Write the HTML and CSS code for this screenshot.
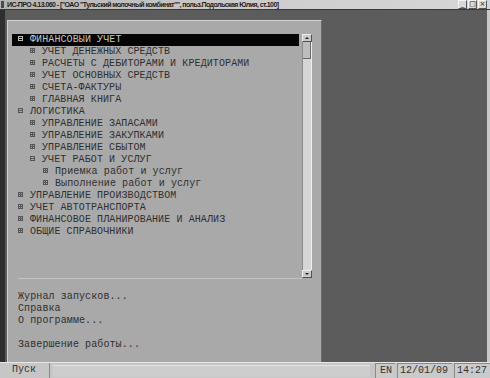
FILE: index.html
```html
<!DOCTYPE html>
<html>
<head>
<meta charset="utf-8">
<title>ИС-ПРО 4.13.060</title>
<link rel="stylesheet" href="styles.css">
</head>
<body>
<div class="screen">
	<div class="titlebar">
		<span class="app-ico"></span>
		<span class="title">ИС-ПРО 4.13.060 - ["ОАО "Тульский молочный комбинат"", польз.Подольская Юлия, ст.100]</span>
		<span class="wbtns">
			<span class="wbtn">_</span><span class="wbtn">&#9633;</span><span class="wbtn">&times;</span>
		</span>
	</div>

	<div class="main">
		<div class="edge"></div>
		<div class="desk">
			<div class="panel">
				<div class="tree-box">
					<ul class="tree">
						<li class="l1 sel"><span class="ico minus"></span>ФИНАНСОВЫЙ УЧЕТ</li>
						<li class="l2"><span class="ico"></span>УЧЕТ ДЕНЕЖНЫХ СРЕДСТВ</li>
						<li class="l2"><span class="ico"></span>РАСЧЕТЫ С ДЕБИТОРАМИ И КРЕДИТОРАМИ</li>
						<li class="l2"><span class="ico"></span>УЧЕТ ОСНОВНЫХ СРЕДСТВ</li>
						<li class="l2"><span class="ico"></span>СЧЕТА-ФАКТУРЫ</li>
						<li class="l2"><span class="ico"></span>ГЛАВНАЯ КНИГА</li>
						<li class="l1"><span class="ico minus"></span>ЛОГИСТИКА</li>
						<li class="l2"><span class="ico"></span>УПРАВЛЕНИЕ ЗАПАСАМИ</li>
						<li class="l2"><span class="ico"></span>УПРАВЛЕНИЕ ЗАКУПКАМИ</li>
						<li class="l2"><span class="ico"></span>УПРАВЛЕНИЕ СБЫТОМ</li>
						<li class="l2"><span class="ico minus"></span>УЧЕТ РАБОТ И УСЛУГ</li>
						<li class="l3"><span class="ico"></span>Приемка работ и услуг</li>
						<li class="l3"><span class="ico"></span>Выполнение работ и услуг</li>
						<li class="l1"><span class="ico"></span>УПРАВЛЕНИЕ ПРОИЗВОДСТВОМ</li>
						<li class="l1"><span class="ico"></span>УЧЕТ АВТОТРАНСПОРТА</li>
						<li class="l1"><span class="ico"></span>ФИНАНСОВОЕ ПЛАНИРОВАНИЕ И АНАЛИЗ</li>
						<li class="l1"><span class="ico"></span>ОБЩИЕ СПРАВОЧНИКИ</li>
					</ul>
					<div class="scroll">
						<div class="sbtn up"></div>
						<div class="track"><div class="thumb"></div></div>
						<div class="sbtn down"></div>
					</div>
				</div>
				<div class="sep"></div>
				<ul class="menu">
					<li>Журнал запусков...</li>
					<li>Справка</li>
					<li>О программе...</li>
					<li>&nbsp;</li>
					<li>Завершение работы...</li>
				</ul>
			</div>
		</div>
	</div>

	<div class="taskbar">
		<span class="start">Пуск</span>
		<span class="bar-fill"></span>
		<span class="tray lang">EN</span>
		<span class="tray date">12/01/09</span>
		<span class="tray time">14:27</span>
	</div>
</div>
</body>
</html>
```

FILE: styles.css
```css
body {
	margin: 0px;
	background: #5c5c5c;
}
.screen {
	width: 490px;
	height: 378px;
	overflow: hidden;
	display: flex;
	flex-direction: column;
	font-family: "Liberation Mono", "DejaVu Sans Mono", monospace;
}

/* title bar */
.titlebar {
	height: 9px;
	border-bottom: 1px solid #3a3a3a;
	background: linear-gradient(to right, #b4b4b4, #cfcfcf 60%, #d6d6d6);
	display: flex;
	align-items: center;
	padding-left: 1px;
	padding-right: 3px;
}
.app-ico {
	width: 3px;
	height: 7px;
	background: #4a4a4a;
	margin-right: 3px;
}
.title {
	flex: 1;
	font-family: "Liberation Sans", Arial, sans-serif;
	font-size: 7px;
	font-weight: bold;
	letter-spacing: -0.55px;
	color: #1e1e1e;
	white-space: nowrap;
	line-height: 9px;
}
.wbtns {
	display: flex;
	gap: 1px;
}
.wbtn {
	width: 7px;
	height: 7px;
	background: #d8d8d8;
	border: 1px solid;
	border-color: #f4f4f4 #555 #555 #f4f4f4;
	font-family: "DejaVu Sans", sans-serif;
	font-size: 7px;
	line-height: 6px;
	text-align: center;
	color: #222;
}

/* main area */
.main {
	height: 352px;
	display: flex;
}
.edge {
	width: 5px;
	background: #2e2e2e;
}
.desk {
	flex: 1;
	background: #5c5c5c;
	padding: 10px 0 0 2px;
	border-right: 3px solid #c9c9c9;
}
.panel {
	width: 313px;
	height: 341px;
	background: #a9a9a9;
	border-top: 1px solid #d2d2d2;
	border-left: 1px solid #d2d2d2;
	border-right: 1px solid #6a6a6a;
	padding-top: 13px;
}

.tree-box {
	display: flex;
	height: 244px;
	margin-left: 4px;
}
.tree {
	list-style: none;
	margin: 0;
	padding: 0;
	width: 287px;
	margin-right: 3px;
}
.tree li, .menu li {
	height: 12px;
	line-height: 12px;
	font-size: 10px;
	letter-spacing: 0.1px;
	color: #2f2f2f;
	white-space: nowrap;
}
.tree li.sel {
	background: #050505;
	color: #c4c4c4;
}
.l1 { padding-left: 6px; }
.l2 { padding-left: 18px; }
.l3 { padding-left: 31px; }

.ico {
	display: inline-block;
	width: 3px;
	height: 3px;
	margin-right: 7px;
	vertical-align: 1px;
	border: 1px solid #555;
	background:
		linear-gradient(#555, #555) center / 3px 1px no-repeat,
		linear-gradient(#555, #555) center / 1px 3px no-repeat;
}
.ico.minus {
	background: linear-gradient(#555, #555) center / 3px 1px no-repeat;
}
.sel .ico {
	border-color: #bbb;
	background: linear-gradient(#bbb, #bbb) center / 3px 1px no-repeat;
}

/* scrollbar */
.scroll {
	width: 10px;
	display: flex;
	flex-direction: column;
}
.sbtn {
	height: 8px;
	background: #c9c9c9;
	border: 1px solid;
	border-color: #eee #505050 #505050 #eee;
	box-sizing: border-box;
	display: flex;
	align-items: center;
	justify-content: center;
}
.sbtn::before {
	content: "";
	border-left: 2px solid transparent;
	border-right: 2px solid transparent;
}
.sbtn.up::before { border-bottom: 2px solid #222; }
.sbtn.down::before { border-top: 2px solid #222; }
.track {
	flex: 1;
	background: #d6d6d6;
	border-left: 1px solid #8a8a8a;
	border-right: 1px solid #efefef;
}
.thumb {
	height: 16px;
	background: #bdbdbd;
	border-bottom: 1px solid #6a6a6a;
	border-right: 1px solid #6a6a6a;
}

.sep {
	margin-left: 10px;
	width: 284px;
	border-top: 1px solid #c4c4c4;
}

.menu {
	list-style: none;
	margin: 0;
	padding: 12px 0 0 10px;
}

/* taskbar */
.taskbar {
	height: 15px;
	border-top: 1px solid #e6e6e6;
	background: #c6c6c6;
	display: flex;
	align-items: stretch;
	font-size: 10px;
	color: #333;
	line-height: 14px;
}
.start {
	width: 37px;
	margin-left: 3px;
	padding-left: 9px;
	border-right: 1px solid #8a8a8a;
}
.bar-fill {
	flex: 1;
	background: #cdcdcd;
	border-top: 1px solid #e2e2e2;
	margin: 2px 3px 1px 3px;
}
.tray {
	border-left: 1px solid #8a8a8a;
	border-top: 1px solid #8a8a8a;
	padding: 0 2px;
	margin-left: 2px;
	background: #cacaca;
}
.lang { width: 13px; padding-left: 4px; }
.date { width: 50px; }
.time { width: 31px; }
```
